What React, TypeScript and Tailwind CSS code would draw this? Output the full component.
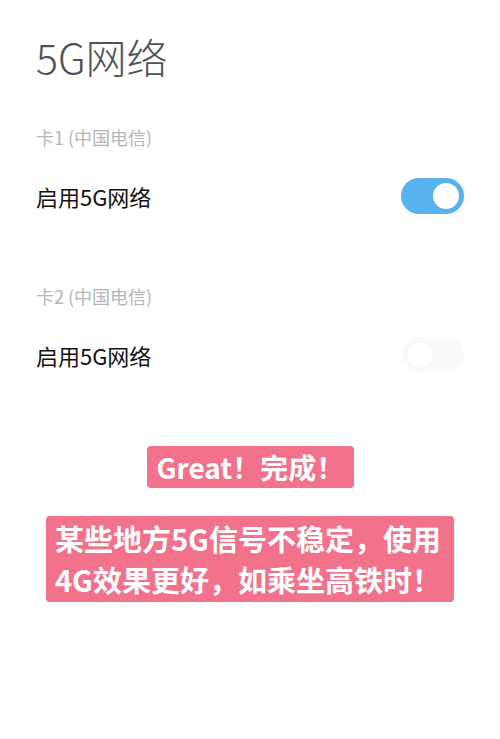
import { useState } from 'react';

const FONT = { fontFamily: '"Noto Sans CJK SC", "Noto Sans", sans-serif' };

function Toggle({ on, onChange }: { on: boolean; onChange: () => void }) {
  return (
    <button
      type="button"
      role="switch"
      aria-checked={on}
      onClick={onChange}
      className={
        on
          ? 'flex h-[36px] w-[63px] items-center justify-end rounded-full bg-[#58b2ee] px-[5px]'
          : 'flex h-[35px] w-[62px] items-center justify-start rounded-full bg-[#f9fafb] px-[4px]'
      }
    >
      <span
        className={
          on
            ? 'h-[26px] w-[26px] rounded-full bg-white'
            : 'h-[28px] w-[28px] rounded-full border border-[#f3f4f6] bg-white'
        }
      />
    </button>
  );
}

export default function App() {
  const [sim1, setSim1] = useState(true);
  const [sim2, setSim2] = useState(false);

  return (
    <div className="min-h-[739px] w-[500px] bg-white" style={FONT}>
      <div className="px-[36px] pt-[30px]">
        <h1 className="text-[41px] font-light leading-[52px] text-[#505257]">5G网络</h1>

        <div className="mt-[43px] text-[18px] leading-[24px] text-[#b3b6bc]">卡1 (中国电信)</div>
        <div className="mt-[29px] flex items-center justify-between">
          <span className="text-[22px] leading-[30px] text-[#111]">启用5G网络</span>
          <Toggle on={sim1} onChange={() => setSim1(!sim1)} />
        </div>

        <div className="mt-[70px] text-[18px] leading-[24px] text-[#b3b6bc]">卡2 (中国电信)</div>
        <div className="mt-[29px] flex items-center justify-between">
          <span className="text-[22px] leading-[30px] text-[#111]">启用5G网络</span>
          <Toggle on={sim2} onChange={() => setSim2(!sim2)} />
        </div>
      </div>

      <div className="mt-[74px] flex flex-col items-center">
        <div className="h-[42px] w-[207px] whitespace-nowrap rounded-[4px] bg-[#f2718b] pl-[10px] text-[28px] font-bold leading-[42px] text-white">
          Great！完成！
        </div>
        <div className="mt-[28px] w-[408px] whitespace-nowrap rounded-[4px] bg-[#f2718b] px-[9px] py-[2px] text-[29px] font-bold leading-[41px] text-white">
          某些地方5G信号不稳定，使用
          <br />
          4G效果更好，如乘坐高铁时！
        </div>
      </div>
    </div>
  );
}
